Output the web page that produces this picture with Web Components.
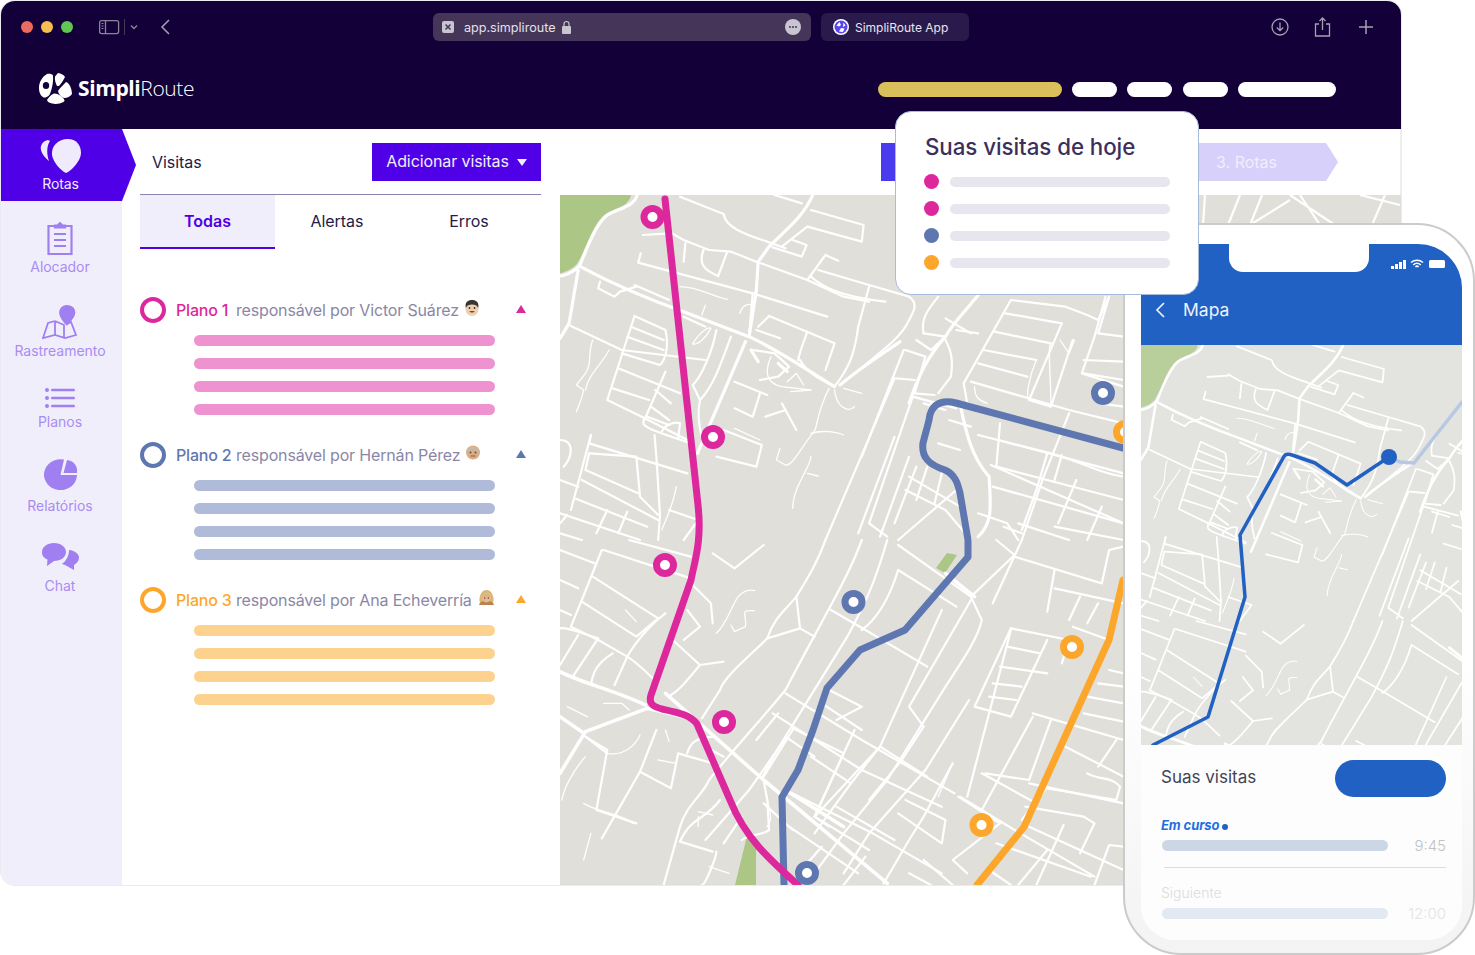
<!DOCTYPE html>
<html lang="pt"><head><meta charset="utf-8"><title>SimpliRoute</title>
<style>html,body{margin:0;padding:0;background:#fff;font-family:Inter,"Liberation Sans",sans-serif}</style>
</head><body>
<sr-app></sr-app>
<script>
const THICK7=["M212,15C205,50 160,55 130,75C100,100 75,170 55,225C45,240 15,258 0,258","M60,232C150,285 250,330 340,365L520,440C600,480 680,540 755,590","M695,15C670,80 620,120 575,170L545,215L540,300L520,440","M50,240L25,400L0,445","M770,585C830,530 890,490 935,455","M510,455L378,790","M1150,315C1110,370 1080,400 1060,440C1010,500 985,560 960,640","M1100,640C1115,720 1130,800 1180,860C1185,950 1190,1000 1150,1040","M525,480L545,515","M600,520L625,545"];
const MED7=["M330,20L450,72C455,110 500,130 570,155L620,175","M590,15L665,40","M690,60L835,105L830,155L680,110L610,170","M640,150L678,165L665,200L585,172","M300,125L340,150L410,180L470,185L540,215L680,270L780,320L850,335","M730,195L680,270M730,195L765,212","M710,240L850,285L960,320C985,340 975,360 960,390C940,440 900,470 770,585","M690,260C720,290 770,320 895,335","M850,290L820,410C810,500 790,540 755,590","M345,160L340,215","M395,180C380,220 395,240 435,258","M460,185L435,258","M222,190L215,218L530,310L735,380","M530,310L520,435","M228,135L300,130","M110,275L105,295L150,320L165,305L210,290L205,285L300,330","M205,378L130,630L225,680L360,755","M205,378L290,420C300,470 290,510 275,525L170,490","M195,410L285,450","M185,440L285,480","M160,535L330,610","M145,595L245,630","M30,408L170,480L400,510","M340,380L400,410","M430,420C420,480 390,560 365,585L385,630","M470,440C440,530 420,590 385,630C375,680 385,720 390,740","M540,420L605,445","M575,378L545,410","M575,378L755,460L730,540","M680,425C670,460 660,480 655,510","M480,575L570,615","M550,610L530,680L480,655","M230,690C225,710 235,715 360,760","M85,735L80,760L350,850","M80,790L210,800L220,920L270,975","M85,735L30,960","M80,790L70,840L215,910","M60,870L270,990","M40,925L240,1010","M0,970L220,1050","M260,735L265,800L275,975L270,1050","M0,750C40,750 35,800 10,830","M450,720L555,765L540,830L430,800","M0,870L50,890","M530,480L590,490L630,530L600,560L550,570","M660,510C680,550 720,570 755,590","M950,480L1005,500L975,610L1030,615","M925,565L975,570","M920,565L730,1050","M945,480L830,800","M970,620L850,1000L900,1040","M970,620L1090,655","M1060,450C1080,490 1080,520 1075,560L1040,610","M1000,430C990,380 1020,350 1040,320","M980,450L1020,480L1060,440L1000,430","M1240,330L1390,350L1450,375L1480,390L1510,320","M1240,330L1110,580L1120,640L1175,660","M1225,370L1380,400","M1195,425L1350,460","M1165,480L1310,510","M1150,520L1285,560","M1130,575L1400,660L1550,700","M1380,400L1290,630L1350,650L1410,450","M1440,510L1550,515","M1440,550L1550,570","M1210,700L1200,830L1550,930","M1150,735L1350,790C1450,820 1480,850 1550,860","M1400,670L1330,860L1270,1050","M1090,420L1150,430","M1060,385L1130,430","M1185,825L1550,1000","M950,900L1060,960L1130,1050","M960,860L1100,950","M1010,830L980,930","M1050,850L1030,940","M1090,900L930,1050","M1360,1010L1550,1050","M1220,1010L1270,1030","M1500,320L1470,440L1435,550L1550,590",
"M290,545L232,690","M262,600L305,640","M250,650L300,690","M240,680L300,705","M280,725C290,700 320,695 330,700L325,745","M20,975L0,1000","M1510,320L1480,430L1550,440","M1205,750L1550,850","M1190,890L1550,1000","M1480,640L1550,650","M1340,790L1310,900L1270,1020","M1380,795L1360,870","M1370,1000L1420,870","M920,1000L980,830","M880,1040L960,800","M820,1030L920,740","M1000,720L1020,640","M1150,970L1230,1000L1260,1050","M1070,690L1130,710","M1040,760L1100,780","M1000,640L1060,660","M1260,1000L1400,1050","M1450,1050L1490,950","M610,640L650,720","M565,680L620,660","M300,960L380,990L340,1050","M100,1030L130,960","M160,1030L185,965","M0,1030L60,1050"];
const THIN7=["M330,290C380,290 420,320 460,328","M400,345L390,375","M90,450C75,490 90,520 70,550L45,585L65,600C60,630 50,650 45,665","M135,480C110,530 80,550 70,600","M365,460C390,420 410,410 415,415C400,445 380,465 365,462Z","M495,370C500,345 520,340 525,345","M740,595C700,680 710,720 695,730C670,760 640,830 620,825L595,810L605,775","M690,730C720,720 760,725 780,735","M755,600C760,650 790,670 810,650","M780,595L830,610","M690,800C690,830 640,890 640,955","M680,850L710,858","M580,500C560,550 570,580 610,590L690,600","M480,715L550,750","M320,890C310,950 290,990 280,1020","M1375,450L1400,490L1415,450","M1310,510C1290,560 1280,620 1290,630","M1350,460C1340,470 1350,560 1350,640","M1140,590C1140,620 1150,630 1175,640","M635,605L690,600","M625,575L650,550L670,585"];
const THICK8=["M0,395C60,430 150,450 235,495","M70,575L240,505L340,530","M70,575L0,700","M0,530L60,575","M290,460L560,720L900,1030","M1060,100L1140,170","M620,750L780,860"];
const MED8=["M0,30L95,70","M120,30L360,115","M190,0L360,50","M115,30L60,180L30,260","M60,185L210,290L270,235","M90,110L270,235","M30,260L105,300L185,350C215,370 250,410 270,430","M0,265C20,260 60,280 105,295","M50,285L0,375","M105,295L35,410","M145,340C100,370 90,400 85,435","M185,350L150,435","M290,220C240,260 200,320 185,350","M360,130L415,190L420,250","M310,300L385,375","M350,210L385,260L340,300","M385,375L450,365","M385,375C350,420 330,450 305,465","M420,40L480,85L560,15","M730,0C710,60 690,100 650,170C620,210 590,230 570,295C530,340 450,410 440,450L390,535","M650,170L660,265L570,295","M660,265L700,290","M830,0C790,120 720,240 620,450C560,530 460,650 410,720C390,770 350,790 330,860L285,1035","M900,0C870,110 850,170 790,290L620,590C590,640 570,680 555,715","M930,90C910,160 880,230 830,270","M930,15L1130,170L1160,240C1150,290 1120,340 1060,440L900,720L780,880L700,1000","M930,90L1090,200","M745,210L840,270L1010,380","M1130,180L960,500L1000,560","M620,460L830,600L1085,760","M585,520L830,690L1050,800","M640,565L780,640L700,830L740,860","M1050,210L880,620L700,830","M810,570L700,830","M740,450L830,500L760,540","M620,750L860,880L1050,1000","M630,860L820,1000","M1125,480L1005,690L850,880L780,1000","M1080,670L1000,830L960,900L890,1030","M950,780L1060,840L1050,910L930,820","M1100,770L1250,870L1470,1010","M1095,770L1210,850L1080,960L1120,1000","M1240,270L1120,770","M1300,530L1160,810","M1340,300L1240,530L1140,500L1240,265","M1230,320L1320,340","M1210,380L1340,400","M1190,430L1270,440","M1180,470L1255,480","M1300,520L1550,600","M1350,540L1290,720L1170,700","M1290,730L1550,790","M1200,0L1250,45L1130,170","M1250,50L1490,130L1510,30L1550,20","M1360,90L1340,215","M1360,145L1550,190","M1430,170L1400,240","M1480,190L1450,250","M1270,0L1190,190","M1390,620L1550,710","M1450,700C1480,720 1520,710 1540,740L1530,780L1340,745","M1280,800L1440,830L1470,850L1430,940","M1200,910L1460,1010","M1290,860L1550,990","M1385,855L1310,1035","M1340,740L1270,840","M1550,920L1510,915L1470,1035","M1410,260L1510,300","M1510,390L1550,400","M70,590L130,630L100,810L210,850","M265,570L220,695L115,895","M220,695L305,745L325,640L420,670","M330,905L420,935","M430,935C430,950 400,1035 390,1035","M350,640C360,600 380,595 420,590","M720,920L680,970",
"M640,570L560,710","M620,595L520,750L400,900","M690,650L800,730","M720,490L830,570","M880,620L1010,710","M700,830L850,930","M800,730L700,880","M760,800L920,900","M1000,560L940,660L850,780","M880,620L800,730","M1160,700L1310,790","M1240,265L1400,300","M1400,300L1380,370","M1480,430L1550,440","M1450,470L1550,490","M1440,520L1550,545","M1530,600L1480,680","M0,120L50,145","M0,210L30,225","M440,780C400,840 360,830 330,905","M500,830L450,910","M560,720L570,780L575,870C550,890 520,880 500,900","M620,590L700,650","M560,790L640,870","M1000,960L1080,1035","M960,1000L1020,1035","M1340,930L1260,1035","M1180,990L1240,1035","M600,520L540,600","M450,650L400,620","M840,950L780,1035","M130,640L70,590"];
const THIN8=["M430,280C460,250 470,200 490,170C510,145 530,150 535,152","M470,255L480,275L510,260C515,220 490,210 535,212","M70,650C30,700 10,750 5,780","M65,790C110,820 170,820 200,850","M85,880L65,960","M380,815L420,825","M130,640C180,650 210,610 220,585","M290,570L300,605","M410,980L465,1000","M180,210L210,245","M20,500L75,530","M570,770C570,800 590,830 570,860","M1080,670L1040,770","M120,490L170,490L190,510","M270,660L320,670","M380,830L380,860"];
function group(list,w,k,sx,sy,oy){return `<g transform="translate(560,${oy}) scale(${sx},${sy})" fill="none" stroke="#fff" stroke-width="${w*k}" stroke-linecap="round" stroke-linejoin="round">`+list.map(d=>`<path vector-effect="non-scaling-stroke" d="${d}"/>`).join("")+"</g>";}
function roads(k){const a=1/2.75,b=1/3;return group(THICK7,3.2,k,a,b,190)+group(MED7,2.2,k,a,b,190)+group(THIN7,1.3,k,a,b,190)+group(THICK8,3.6,k,a,b,540)+group(MED8,2.2,k,a,b,540)+group(THIN8,1.3,k,a,b,540);}
const PARKS=`<path transform="translate(560,190) scale(.3636,.3333)" fill="#abc685" d="M0,15L195,15C190,50 150,55 125,72C90,100 75,170 50,215C40,235 15,245 0,250Z"/>`;

function def(name,html){customElements.define(name,class extends HTMLElement{constructor(){super();this.attachShadow({mode:"open"});}connectedCallback(){if(this.shadowRoot.innerHTML)return;this.shadowRoot.innerHTML=typeof html==="function"?html(this):html;}});}

def("sr-toolbar",`<style>
:host{display:flex;align-items:center;height:52px;padding:0 0 0 20px;position:relative;color:#fff;box-sizing:border-box}
.d{width:12px;height:12px;border-radius:50%;margin-right:8px}
svg{display:block;flex:none}
.url{width:378px;height:28px;box-sizing:border-box;background:#453559;border-radius:6px;display:flex;align-items:center;padding:0 10px 0 9px;font-size:12.6px;color:#e4e0ea}
.fav{width:12px;height:12px;background:#c9c5d0;border-radius:2px;margin-right:10px;display:flex;align-items:center;justify-content:center;flex:none}
.tab{width:148px;height:28px;box-sizing:border-box;background:#2a1a4c;border-radius:6px;margin-left:10px;display:flex;align-items:center;padding-left:12px;font-size:12px;color:#e8e5ee}
.more{margin-left:auto;width:16px;height:16px;border-radius:50%;background:#c9c5d0;display:flex;align-items:center;justify-content:center;gap:1px}
.more i{width:2px;height:2px;background:#453559;border-radius:50%}
.right{margin-left:auto;display:flex;align-items:center;padding-right:28px}
</style>
<span class="d" style="background:#ed6a5e"></span><span class="d" style="background:#f4bf4f"></span><span class="d" style="background:#61c554;margin-right:0"></span>
<svg width="40" height="20" viewBox="0 0 40 20" style="margin-left:26px" fill="none" stroke="#8d8399" stroke-width="1.300"><rect x=".6" y="3.600" width="19" height="13" rx="2"/><path d="M6.500 3.600V16.600"/><path d="M2.500 6.500h2M2.500 9h2M2.500 11.500h2" stroke-width="1"/><path d="M25.500 2V18" stroke-width=".7" stroke="#5a4d6c"/><path d="M32 8.500l3 3 3-3" stroke-width="1.400"/></svg>
<svg width="14" height="20" viewBox="0 0 14 20" style="margin-left:20px" fill="none" stroke="#a8a0b3" stroke-width="1.500"><path d="M10 3L3 10l7 7"/></svg>
<div class="url" style="margin-left:260px"><span class="fav"><svg width="8" height="8" viewBox="0 0 8 8" stroke="#453559" stroke-width="1.500"><path d="M1.500 1.500l5 5M6.500 1.500l-5 5"/></svg></span>app.simpliroute<svg width="11" height="14" viewBox="0 0 11 14" style="margin-left:5px"><rect x="1" y="6" width="9" height="8" rx="1" fill="#c9c5d0"/><path d="M3 6V4a2.500 2.500 0 015 0v2" fill="none" stroke="#c9c5d0" stroke-width="1.200"/></svg><span class="more"><i></i><i></i><i></i></span></div>
<div class="tab"><svg width="16" height="16" viewBox="0 0 16 16" style="margin-right:6px"><circle cx="8" cy="8" r="8" fill="#fff"/><circle cx="8" cy="8" r="6.500" fill="#5a45ef"/><path d="M6.500 3L8 6 6 7.500 3.500 6.500zM10.500 3.500L12.500 6.500 10 8zM8 9l3.500.5-1.500 3.500L6 12.500z" fill="#fff"/></svg>SimpliRoute App</div>
<div class="right">
<svg width="18" height="18" viewBox="0 0 18 18" fill="none" stroke="#a8a0b3" stroke-width="1.300" style="margin-right:25px"><circle cx="9" cy="9" r="8"/><path d="M9 4.500v8M5.800 9.500L9 12.700l3.200-3.200"/></svg>
<svg width="17" height="20" viewBox="0 0 17 20" fill="none" stroke="#a8a0b3" stroke-width="1.300" style="margin-right:28px"><path d="M5 7H1.500v12h14V7H12M8.500 13V1M5.500 4l3-3 3 3"/></svg>
<svg width="14" height="14" viewBox="0 0 14 14" fill="none" stroke="#a8a0b3" stroke-width="1.500"><path d="M7 0v14M0 7h14"/></svg>
</div>`);

def("sr-nav",`<style>
:host{display:flex;align-items:center;height:76px;box-sizing:border-box;padding:0 65px 3px 38px;color:#fff}
.logo{display:flex;align-items:center;gap:5px;font-family:"Open Sans",sans-serif;font-size:21px;letter-spacing:-.4px;line-height:1;margin-top:-2px}
b{font-weight:700}span{font-weight:300}
.pills{margin-left:auto;display:flex;gap:10px}
.pills i{display:block;height:15px;border-radius:8px;background:#fff}
</style>
<div class="logo"><svg width="34" height="32" viewBox="0 0 34 32" fill="#fff"><path fill-rule="evenodd" d="M8 1C10 .5 13.500 1 14 2.500C14.500 8 13.500 14 11 21C9 24 6 25 4.500 24.500C2 23 0 20 0 15C0 9 3 4 8 1ZM7 9a3.200 3.500 0 100 7a3.200 3.500 0 000-7Z"/><path d="M19 0C22 .5 25 2 26 4C24 8 22 11 20 13L18 13C16.500 10 15.500 7 16 3.500Z"/><path d="M27 9C30 10 32.500 14 33 21C31 24 27 25.500 25 25C22 24 19.500 21 19 18C20 16 24 12 27 9Z"/><path d="M15 20.500C18 20.500 21 22 23.500 24.500C26 27 26 28 24.500 29C20 31.500 14 31.500 10 29.500C8 28 7.500 27 9 25.500C11 23 13 21 15 20.500Z"/></svg><div><b>Simpli</b><span>Route</span></div></div>
<div class="pills"><i style="width:184px;background:#d9c05a"></i><i style="width:45px"></i><i style="width:45px;margin-right:1px"></i><i style="width:45px"></i><i style="width:98px"></i></div>`);

def("sr-side-item",t=>`<style>
:host{display:flex;flex-direction:column;align-items:center;color:#a98cf2;font-size:14px;line-height:18px;white-space:nowrap;letter-spacing:-.03px}
.l{margin-top:var(--g,3px)}
::slotted(svg){display:block}
</style><slot name="icon"></slot><div class="l" style="--g:${t.getAttribute("gap")||3}px">${t.getAttribute("label")}</div>`);

def("sr-sidebar",`<style>
:host{display:block;width:121px;flex:none;background:#f1eefc;position:relative;align-self:stretch}
.active{width:135px;height:72px;margin-right:-14px;background:#5000e6;clip-path:polygon(0 0,121px 0,135px 50%,121px 100%,0 100%);color:#efeafc;font-size:14px;line-height:18px;display:flex;flex-direction:column;align-items:center;box-sizing:border-box;padding:9px 16px 0 0;position:relative;z-index:1}
.items{display:flex;flex-direction:column;gap:28px;padding:21px 3px 0 0}
svg{display:block}
</style>
<div class="active"><svg width="42" height="36" viewBox="0 0 42 36" fill="#efeafc"><path d="M28 1C18 1 11 8 12 17C13 24 21 33 26 35C31 33 41 23 41 15C41 7 36 1 28 1Z"/><path d="M8 2C3 3 0 7 1 12C2 17 7 21 9 23C7 17 6 9 10 3Z"/></svg><div style="margin-top:1px;letter-spacing:-.1px">Rotas</div></div>
<div class="items"><slot></slot></div>`);

def("sr-plan",t=>{const c=t.getAttribute("color"),l=t.getAttribute("light");return `<style>
:host{display:block;margin-bottom:27px}
.h{display:flex;align-items:center;height:26px;font-size:16px;white-space:nowrap;padding-right:15px}
.r{width:26px;height:26px;box-sizing:border-box;border:4px solid ${c};border-radius:50%;margin-right:10px;flex:none}
.n{width:60px;flex:none;color:${c};font-weight:500;letter-spacing:-.2px;margin-top:-1px}
.o{color:#8a87a6;letter-spacing:-.16px;margin-top:-1px}
.e{display:flex;margin-left:6px;margin-top:-5px}
.t{margin-left:auto;width:0;height:0;border-left:5.500px solid transparent;border-right:5.500px solid transparent;border-bottom:8px solid ${c};margin-top:-2px}
.bars{display:flex;flex-direction:column;gap:12px;margin:12px 0 0 54px;width:301px}
.bars i{display:block;height:11px;border-radius:6px;background:${l}}
</style><div class="h"><span class="r"></span><span class="n">${t.getAttribute("name")}</span><span class="o">${t.getAttribute("owner")}</span><span class="e"><slot></slot></span><span class="t"></span></div>
<div class="bars"><i></i><i></i><i></i><i></i></div>`});

def("sr-panel",`<style>
:host{display:block;width:438px;flex:none;box-sizing:border-box;padding:0 19px 0 18px;background:#fff;color:#241a45}
.top{height:65px;display:flex;align-items:center;justify-content:space-between;padding-left:12px;font-size:16px;border-bottom:1px solid #8a83ad;letter-spacing:-.05px}
button{all:unset;width:169px;height:38px;background:#5000e6;color:#f1eefc;font-size:16px;letter-spacing:-.1px;display:flex;align-items:center;justify-content:center;gap:8px;padding-bottom:1px;box-sizing:border-box}
button i{display:block;width:0;height:0;border-left:5.500px solid transparent;border-right:5.500px solid transparent;border-top:7px solid #f1eefc;margin-top:2px}
.tabs{display:flex;height:54px;font-size:16px;letter-spacing:-.05px}
.tabs div{display:flex;align-items:center;justify-content:center;box-sizing:border-box;padding-bottom:3px}
.tabs .on{width:135px;background:#f1eefc;border-bottom:2px solid #5000e6;color:#5000e6;font-weight:600;padding-bottom:1px}
.plans{padding-top:48px}
</style><div class="top">Visitas<button>Adicionar visitas<i></i></button></div>
<div class="tabs"><div class="on">Todas</div><div style="width:124px">Alertas</div><div style="width:140px">Erros</div></div>
<div class="plans"><slot></slot></div>`);

def("sr-stepper",`<style>
:host{display:flex;height:66px;align-items:center;justify-content:flex-end;padding:0 62px 0 0;box-sizing:border-box;background:#fff;border-right:1px solid #eee}
.a{width:30px;height:38px;background:#4b3bef;margin-right:287px}
.b{width:140px;height:38px;box-sizing:border-box;padding-left:18px;display:flex;align-items:center;background:#d6d0fa;color:#f1eefc;font-size:16px;clip-path:polygon(0 0,128px 0,140px 50%,128px 100%,0 100%)}
</style><div class="a"></div><div class="b">3. Rotas</div>`);

const ring=(x,y,c)=>`<circle cx="${x}" cy="${y}" r="8.500" fill="#fff" stroke="${c}" stroke-width="7"/>`;
def("sr-map",`<style>:host{display:block;flex:1;height:690px;background:#e0dfda;overflow:hidden}svg{display:block}</style>
<svg width="841" height="690" viewBox="560 195 841 690">
${PARKS}
<path fill="#abc685" d="M936,568L947,553L957,555L945,573ZM747,836L756,848V885H735Z"/>
${roads(1)}
<g fill="none" stroke="#fff" stroke-width="2.200"><path d="M1205,195L1203,225M1240,195L1228,225M1262,195L1250,225L1290,200M1290,195L1335,225M1385,195L1372,225M1360,195L1400,205M1300,195L1320,225"/></g>
<g fill="none" stroke-linecap="round" stroke-linejoin="round" stroke-width="7">
<path stroke="#5f77b1" d="M1123,448L956,403C938,398 930,408 929,420L923,443C921,458 930,465 945,470C956,475 958,485 960,493L968,540V557L905,630L860,650L827,688L813,730L798,770L782,797L784,885"/>
<path stroke="#fca72c" d="M1123,580L1109,640L1024,827L977,885"/>
<path stroke="#dd279d" d="M665,199L698,505C702,540 695,560 691,580L651,695C648,705 655,707 662,709C680,713 690,715 697,724L730,800C745,838 770,860 798,885"/>
</g>
${ring(652.500,217,"#dd279d")}${ring(713,437,"#dd279d")}${ring(665,565,"#dd279d")}${ring(724,722,"#dd279d")}
${ring(1103,393,"#5f77b1")}${ring(853.500,602,"#5f77b1")}${ring(807,873,"#5f77b1")}
${ring(1125,432,"#fca72c")}${ring(1072,647,"#fca72c")}${ring(981.500,825,"#fca72c")}
</svg>`);

def("sr-visit-card",`<style>
:host{display:block;width:304px;height:184px;box-sizing:border-box;background:#fff;border:1px solid #a9bbdd;border-radius:16px;padding:20px 28px 0 29px;color:#3d2f5b}
h2{margin:0 0 6px;font-size:22.300px;line-height:30px;font-weight:500;letter-spacing:-.05px}
.r{display:flex;align-items:center;height:27px;gap:10px}
.r b{width:15px;height:15px;border-radius:50%;flex:none;margin-right:1px;margin-left:-1px}
.r i{display:block;flex:1;height:10px;border-radius:5px;background:#e7e5ed;margin-top:1px}
</style><h2>Suas visitas de hoje</h2>
<div class="r"><b style="background:#dd279d"></b><i></i></div>
<div class="r"><b style="background:#dd279d"></b><i></i></div>
<div class="r"><b style="background:#5f77b1"></b><i></i></div>
<div class="r"><b style="background:#fca72c"></b><i></i></div>`);

def("sr-phone",`<style>
:host{display:block;width:352px;height:732px;box-sizing:border-box;border:2px solid #cbcbcb;border-radius:58px;background:linear-gradient(#fff 60%,#f3f3f3);padding:19px 11px 13px 16px}
.s{height:696px;border-radius:8px 44px 34px 34px;overflow:hidden;background:#fdfdfd;display:flex;flex-direction:column;width:321px}
.hd{height:101px;flex:none;background:#2161c4;color:#eef3fb;box-sizing:border-box;position:relative;display:flex;flex-direction:column}
.notch{position:absolute;left:88px;top:0;width:140px;height:28px;background:#fff;border-radius:0 0 14px 14px}
.st{display:flex;justify-content:flex-end;align-items:center;gap:3px;height:40px;padding:0 15px 0 0}
.ti{display:flex;align-items:center;gap:18px;font-size:17.500px;padding:15px 0 0 14px}
svg{display:block}
.m{height:400px;flex:none;background:#e3e3df}
.b{padding:15px 16px 0 20px;flex:1}
.row{display:flex;justify-content:space-between;align-items:center;font-size:17px;color:#3f4456;line-height:37px}
.t1{margin-top:-2px}
.pill{width:111px;height:37px;background:#2161c4;border-radius:19px}
.cur{font-size:13px;font-weight:700;font-style:italic;color:#1f6fe0;margin-top:19px;line-height:18px;letter-spacing:-.1px;display:flex;align-items:center;gap:3px}
.cur i{width:6px;height:6px;background:#2161c4;border-radius:50%;margin-top:3px}
.line{display:flex;align-items:center;justify-content:space-between;padding-left:1px;height:22px;font-weight:300;font-size:15px}
.line i{display:block;width:226px;height:11px;border-radius:6px}
hr{margin:11px 0 0 3px;border:0;border-top:1px solid #ddd}
.nx{font-size:14px;font-weight:300;color:#dcdcdc;margin-top:16px;line-height:18px}
</style>
<div class="s"><div class="hd"><div class="notch"></div>
<div class="st"><svg width="16" height="9" viewBox="0 0 16 9" fill="#fff"><rect y="6" width="3" height="3"/><rect x="4" y="4" width="3" height="5"/><rect x="8" y="2" width="3" height="7"/><rect x="12" width="3" height="9"/></svg>
<svg width="14" height="10" viewBox="0 0 14 10" fill="none" stroke="#fff" stroke-width="1.500"><path d="M1 3.500a9 9 0 0112 0M3.200 5.800a6 6 0 017.600 0M5.400 7.800a2.500 2.500 0 013.200 0"/></svg>
<svg width="18" height="8" viewBox="0 0 18 8" style="margin-left:2px"><rect width="16" height="8" rx="1.500" fill="#fff"/></svg></div>
<div class="ti"><svg width="10" height="16" viewBox="0 0 10 16" fill="none" stroke="#eef3fb" stroke-width="1.700"><path d="M9 1L2 8l7 7"/></svg>Mapa</div></div>
<div class="m"><svg width="321" height="400" viewBox="1141 345 321 400"><g transform="translate(1141,345) scale(.8) translate(-560,-195)">${PARKS.replace('#abc685','#b9cf9b')}${roads(.8)}</g>
<g fill="none" stroke-linecap="round" stroke-linejoin="round"><path stroke="#b7c8e2" stroke-width="3.500" d="M1389,457L1400,462L1414,463L1462,402"/><path stroke="#2161c4" stroke-width="3.500" d="M1153,745L1208,717L1245,597L1240,535L1282,460C1284,455 1286,453 1292,455L1315,463L1347,485L1389,457"/></g><circle cx="1389" cy="457" r="8" fill="#2161c4"/></svg></div>
<div class="b"><div class="row"><span class="t1">Suas visitas</span><span class="pill"></span></div>
<div class="cur">Em curso<i></i></div>
<div class="line" style="color:#c2c2c2"><i style="background:#ccd7e5"></i>9:45</div><hr>
<div class="nx">Siguiente</div>
<div class="line" style="color:#e3e3e3"><i style="background:#e3e9f2"></i>12:00</div>
</div></div>`);

def("sr-window",`<style>
:host{display:flex;flex-direction:column;width:1400px;height:884px;margin:1px 0 0 1px;border-radius:14px;overflow:hidden;background:#fff;box-shadow:0 0 0 1px #ece9f3}
.chrome{height:128px;flex:none;background:#140039}
.main{flex:1;display:flex;min-height:0}
.right{flex:1;min-width:0;display:flex;flex-direction:column}
</style><div class="chrome"><slot name="toolbar"></slot><slot name="nav"></slot></div>
<div class="main"><slot name="side"></slot><slot name="panel"></slot><div class="right"><slot name="right"></slot></div></div>`);

def("sr-app",`<style>
:host{display:block;position:relative;width:1475px;height:955px;overflow:hidden}
sr-visit-card,sr-phone{position:absolute}
sr-visit-card{left:895px;top:111px;z-index:3}
sr-phone{left:1123px;top:223px;z-index:2}
</style>
<sr-window>
<sr-toolbar slot="toolbar"></sr-toolbar><sr-nav slot="nav"></sr-nav>
<sr-sidebar slot="side">
<sr-side-item label="Alocador"><svg slot="icon" width="26" height="33" viewBox="0 0 26 33" fill="none" stroke="#a07ff0" stroke-width="2.200"><path d="M8 4H1.500V32H24.500V4H18"/><path d="M8 5.500V3.500H10.500L13 1.200L15.500 3.500H18V5.500Z" fill="#a07ff0"/><path d="M7 12H19M7 18H19M7 24H19"/></svg></sr-side-item>
<sr-side-item label="Rastreamento" gap="2"><svg slot="icon" width="36" height="36" viewBox="0 0 36 36" fill="none" stroke="#a07ff0" stroke-width="1.800"><path d="M13 17L6 19L1 34L13 31L23 34L34 31L29 18L25 20M13 17V31M13 17L22 21V34"/><path d="M25 1C20 1 17 5 17 9C17 14 22 20 25 23C28 20 34 14 34 9C34 4 30 1 25 1Z" transform="translate(1 0) scale(.95)" fill="#a07ff0" stroke="none"/></svg></sr-side-item>
<sr-side-item label="Planos" gap="5"><svg slot="icon" width="30" height="20" viewBox="0 0 30 20" fill="#a07ff0"><circle cx="2" cy="2" r="2"/><circle cx="2" cy="10" r="2"/><circle cx="2" cy="18" r="2"/><rect x="6" y=".8" width="24" height="2.400" rx="1.200"/><rect x="6" y="8.800" width="24" height="2.400" rx="1.200"/><rect x="6" y="16.800" width="24" height="2.400" rx="1.200"/></svg></sr-side-item>
<sr-side-item label="Relatórios" gap="7"><svg slot="icon" width="33" height="31" viewBox="0 0 33 31" fill="#a07ff0"><path d="M20 .5A16.500 15.500 0 1033 16H16.500Z"/><path d="M23 1A11 11 0 0133 14H19.500Z"/></svg></sr-side-item>
<sr-side-item label="Chat" gap="7"><svg slot="icon" width="37" height="27" viewBox="0 0 37 27" fill="#a07ff0"><path d="M12 0C5 0 0 4 0 9C0 13 2 15 5.500 16.500L5 23L12 18C19 18 24 14 24 9C24 4 19 0 12 0Z"/><path d="M27 7C27 13 24 18 20 21L23 22L32 27L32 22C35 20 37 18 37 14.500C37 11 33 7.500 27 7Z"/></svg></sr-side-item>
</sr-sidebar>
<sr-panel slot="panel">
<sr-plan color="#dd279d" light="#ee92d0" name="Plano 1" owner="responsável por Victor Suárez"><svg width="14" height="16" viewBox="0 0 14 16"><ellipse cx="7" cy="9" rx="6.500" ry="7" fill="#f0cfae"/><path d="M.8 8C-.5 2 3.500 0 7 0C10.500 0 14.500 2 13.200 8C12 5 10 4.500 7 4.500C4 4.500 2 5 .8 8Z" fill="#3a3530"/><path d="M4 11.800C6 10.800 8 10.800 10 11.800C8 12.600 6 12.600 4 11.800Z" fill="#4a3a30"/><circle cx="4.500" cy="8" r=".9" fill="#333"/><circle cx="9.500" cy="8" r=".9" fill="#333"/></svg></sr-plan>
<sr-plan color="#5f77b1" light="#afbbd8" name="Plano 2" owner="responsável por Hernán Pérez"><svg width="14" height="15" viewBox="0 0 14 15"><circle cx="7" cy="7.500" r="7" fill="#dcae88"/><path d="M.6 6C1.500 .5 12.500 .5 13.400 6L12 6.500C9 4.500 5 4.500 2 6.500Z" fill="#c8b8a8"/><circle cx="4.500" cy="7.500" r="1" fill="#555"/><circle cx="9.500" cy="7.500" r="1" fill="#555"/><path d="M4.500 11h5" stroke="#8a5a3a"/></svg></sr-plan>
<sr-plan color="#fca72c" light="#fdd28f" name="Plano 3" owner="responsável por Ana Echeverría"><svg width="17" height="15" viewBox="0 0 17 15"><path d="M2 13C0 8 3 0 8.500 0C14 0 17 8 15 13Z" fill="#d8b778"/><path d="M1 15C2 11.500 5 11 8.500 11C12 11 15 11.500 16 15Z" fill="#b9824f"/><ellipse cx="8.500" cy="7.500" rx="4.500" ry="5" fill="#e9b892"/><path d="M4 7C5 3 10 2.500 13 7C9 5.500 6 5.500 4 7Z" fill="#d8b778"/><circle cx="6.700" cy="8" r=".7" fill="#5a3a2a"/><circle cx="10.300" cy="8" r=".7" fill="#5a3a2a"/></svg></sr-plan>
</sr-panel>
<sr-stepper slot="right"></sr-stepper><sr-map slot="right"></sr-map>
</sr-window>
<sr-phone></sr-phone><sr-visit-card></sr-visit-card>`);
</script>
</body></html>
